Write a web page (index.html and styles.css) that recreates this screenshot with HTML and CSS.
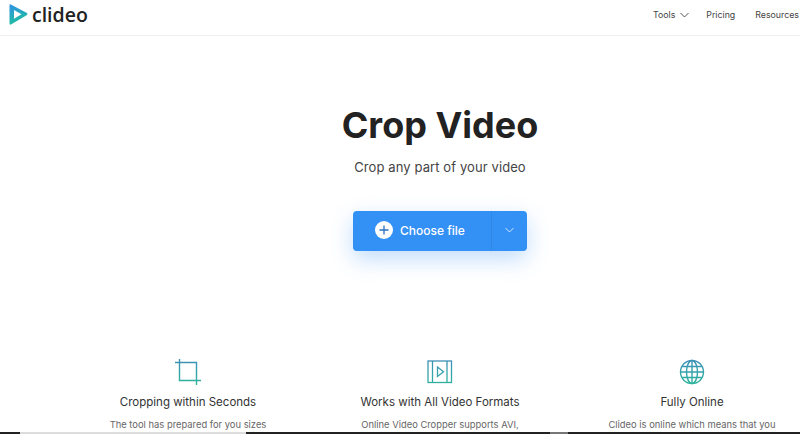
FILE: index.html
```html
<!DOCTYPE html>
<html>
<head>
<meta name="viewport" content="width=device-width, initial-scale=1">
<link rel="stylesheet" href="styles.css">
</head>
<body>

<div class="page">
  <header class="topbar">
    <a class="logo">
      <svg class="logo-mark" width="19" height="21" viewBox="0 0 19 21">
        <defs>
          <linearGradient id="logoGrad" x1="0" y1="0" x2="0.3" y2="1">
            <stop offset="0" stop-color="#2f8fe6"/>
            <stop offset="1" stop-color="#1fc0a0"/>
          </linearGradient>
        </defs>
        <path fill="url(#logoGrad)" d="M0.5 1.2 Q0.5 0 1.8 0.4 L18 9 Q19 10 18 11 L2 20.5 Q0.5 21 0.5 19.5 Z M5 6 V14.800 L12.500 10.300 Z" fill-rule="evenodd"/>
      </svg>
      <span class="logo-text">clideo</span>
    </a>
    <nav class="nav">
      <a class="nav-tools">Tools
        <svg width="9" height="6" viewBox="0 0 9 6"><path d="M0.5 1 L4.5 5 L8.5 1" fill="none" stroke="#555" stroke-width="1"/></svg>
      </a>
      <a>Pricing</a>
      <a>Resources</a>
    </nav>
  </header>

  <main class="hero">
    <h1>Crop Video</h1>
    <p class="lead">Crop any part of your video</p>
    <div class="upload">
      <button class="upload-main">
        <svg width="18" height="18" viewBox="0 0 18 18">
          <circle cx="9" cy="9" r="9" fill="#fff"/>
          <path d="M9 4.5 V13.5 M4.5 9 H13.5" stroke="#2a6fc0" stroke-width="1.3"/>
        </svg>
        Choose file
      </button>
      <button class="upload-more">
        <svg width="9" height="6" viewBox="0 0 9 6"><path d="M0.5 1 L4.5 5 L8.5 1" fill="none" stroke="#cfe4fd" stroke-width="1"/></svg>
      </button>
    </div>
  </main>

  <section class="features">
    <div class="feature">
      <svg width="26" height="26" viewBox="0 0 26 26" fill="none" stroke="url(#iconGrad)" stroke-width="1.4">
        <defs>
          <linearGradient id="iconGrad" gradientUnits="userSpaceOnUse" x1="0" y1="0" x2="0" y2="26">
            <stop offset="0" stop-color="#3d8fb8"/>
            <stop offset="1" stop-color="#2db59c"/>
          </linearGradient>
        </defs>
        <path d="M0 3.5 H21.5 V26 M4.500 0 V21.500 H26"/>
      </svg>
      <h3>Cropping within Seconds</h3>
      <p>The tool has prepared for you sizes</p>
    </div>
    <div class="feature">
      <svg width="26" height="24" viewBox="0 0 26 24" fill="none" stroke="url(#iconGrad)" stroke-width="1.3">
        <rect x="1" y="1" width="23.500" height="21.500"/>
        <path d="M5.500 1 V22.500 M20 1 V22.500 M10.500 7 L16.500 11.700 L10.500 16.500 Z"/>
      </svg>
      <h3>Works with All Video Formats</h3>
      <p>Online Video Cropper supports AVI,</p>
    </div>
    <div class="feature">
      <svg width="26" height="26" viewBox="0 0 26 26" fill="none" stroke="url(#iconGrad)" stroke-width="1.4">
        <circle cx="13" cy="13" r="11.500"/>
        <ellipse cx="13" cy="13" rx="5.500" ry="11.500"/>
        <path d="M13 1.500 V24.500 M1.500 13 H24.500 M3.200 7.500 H22.800 M3.200 18.500 H22.800"/>
      </svg>
      <h3>Fully Online</h3>
      <p>Clideo is online which means that you</p>
    </div>
  </section>

  <div class="taskbar">
    <span class="tb-dark tb-a"></span>
    <span class="tb-light tb-b"></span>
    <span class="tb-dark tb-c"></span>
    <span class="tb-grey tb-d"></span>
    <span class="tb-dark tb-e"></span>
  </div>
</div>

</body>
</html>
```

FILE: styles.css
```css
* {
  box-sizing: border-box;
}

html, body {
  margin: 0;
  height: 100%;
}

body {
  background: #fff;
  color: #222;
  font-family: Inter, "Liberation Sans", sans-serif;
  overflow: hidden;
}

.page {
  height: 434px;
  display: flex;
  flex-direction: column;
  overflow: hidden;
}

.topbar {
  height: 36px;
  flex: none;
  display: flex;
  align-items: center;
  justify-content: space-between;
  padding: 0 1px 6px 9px;
  border-bottom: 1px solid #f0f0f0;
}

.logo {
  display: flex;
  align-items: center;
  gap: 4px;
}

.logo-text {
  font-family: "Open Sans", sans-serif;
  font-size: 19.500px;
  font-weight: 600;
  line-height: 26px;
  color: #222;
}

.nav {
  display: flex;
  gap: 20px;
  font-size: 8.800px;
  color: #444;
  white-space: nowrap;
}

.nav a {
  display: flex;
  align-items: center;
}

.nav-tools {
  gap: 5px;
  margin-right: -3px;
}

.hero {
  flex: none;
  width: 880px;
  display: flex;
  flex-direction: column;
  align-items: center;
}

h1 {
  margin: 64px 0 0;
  font-size: 36px;
  line-height: 50px;
  font-weight: 700;
  color: #222;
}

.lead {
  margin: 8px 0 0;
  font-size: 13px;
  line-height: 18px;
  letter-spacing: 0.1px;
  color: #444;
}

.upload {
  display: flex;
  margin-top: 35px;
  height: 40px;
  width: 174px;
  border-radius: 4px;
  background: #3390f5;
  box-shadow: 0 8px 22px rgba(51, 144, 245, 0.3);
}

.upload button {
  border: none;
  background: none;
  color: #fff;
  font: inherit;
  display: flex;
  align-items: center;
  padding: 0 0 2px;
}

.upload-main {
  flex: 1;
  gap: 7px;
  padding-left: 22px !important;
  font-size: 12px !important;
  font-weight: 500 !important;
}

.upload-more {
  width: 36px;
  justify-content: center;
  border-left: 1px solid #2f86e6 !important;
}

.features {
  display: grid;
  grid-template-columns: repeat(3, 252px);
  width: 880px;
  padding-left: 62px;
  margin-top: 108px;
  flex: none;
}

.feature {
  display: flex;
  flex-direction: column;
  align-items: center;
  text-align: center;
  white-space: nowrap;
}

.feature svg {
  height: 26px;
}

.feature h3 {
  margin: 9px 0 0;
  font-size: 11.500px;
  line-height: 16px;
  font-weight: 400;
  color: #333;
}

.feature p {
  margin: 8px 0 0;
  font-size: 9.400px;
  line-height: 14px;
  color: #666;
}

.taskbar {
  position: absolute;
  left: 0;
  right: 0;
  bottom: 0;
  height: 2px;
  display: flex;
}

.tb-dark {
  background: #222;
}

.tb-light {
  background: #ddd;
}

.tb-grey {
  background: #777;
}

.tb-a {
  width: 20px;
}

.tb-b {
  width: 226px;
}

.tb-c {
  width: 304px;
}

.tb-d {
  width: 18px;
}

.tb-e {
  flex: 1;
}
```
